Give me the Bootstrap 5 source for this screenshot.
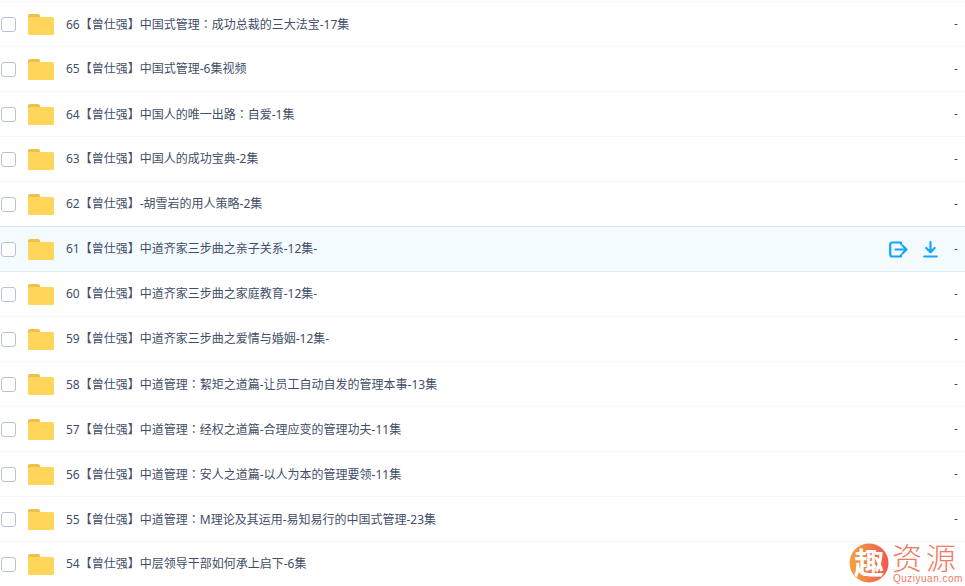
<!DOCTYPE html>
<html lang="zh">
<head>
<meta charset="utf-8">
<title>文件列表</title>
<link href="https://cdn.jsdelivr.net/npm/bootstrap@5.3.0/dist/css/bootstrap.min.css" rel="stylesheet">
<style>
html,body{height:586px;overflow:hidden;background:#fff}
body{font-family:"Noto Sans","Noto Sans CJK SC",sans-serif;font-size:12px;color:#424e67}
.file-list{margin-top:1px;border-top:1px solid #f2f6fd}
.file-row{height:45px;border-bottom:1px solid #f2f6fd}
.file-row.active-row{background:#f4fbff;border-bottom-color:#daebfe;box-shadow:0 -1px 0 #daebfe}
.tick{width:15px;height:15px;border:1px solid #b9c3d3;border-radius:3px;background:#fff;margin-left:1px;flex:none}
.folder{width:26px;height:21px;margin-left:12px;flex:none}
.fname{margin-left:12px;line-height:18px;white-space:nowrap}
.fname i{font-style:normal;font-family:"Noto Sans CJK TC",sans-serif}
.acts{gap:15px;margin-right:16px}
.acts svg{display:block}
.fsize{width:8px;text-align:left;margin-right:3px}
.wm{position:absolute;left:849px;top:543px;width:116px;height:43px;color:#ee7b62}
.wm-title{position:absolute;left:43px;top:-1px;font-size:30px;font-weight:300;line-height:28px;letter-spacing:4px;font-family:"Noto Sans CJK SC",sans-serif;white-space:nowrap}
.wm-sub{position:absolute;left:44px;top:30px;font-size:10px;line-height:12px;font-family:"Liberation Sans",sans-serif;letter-spacing:.5px;white-space:nowrap}
.wm-ball{position:absolute;left:0;top:0;width:40px;height:40px}
</style>
</head>
<body>
<div class="file-list" id="lst"></div>
<div class="wm">
<svg class="wm-ball" viewBox="0 0 40 40"><defs><linearGradient id="g" x1="0" y1="0" x2="1" y2="0"><stop offset="0" stop-color="#f4a23c"/><stop offset="1" stop-color="#ec5a55"/></linearGradient></defs><circle cx="20" cy="20" r="19.500" fill="url(#g)"/><text x="20" y="31" text-anchor="middle" font-size="30" font-weight="700" fill="#fff" font-family="Noto Sans CJK SC">趣</text></svg>
<div class="wm-title">资源</div>
<div class="wm-sub">Quziyuan.com</div>
</div>
<script>
const names=["66【曾仕强】中国式管理：成功总裁的三大法宝-17集","65【曾仕强】中国式管理-6集视频","64【曾仕强】中国人的唯一出路：自爱-1集","63【曾仕强】中国人的成功宝典-2集","62【曾仕强】-胡雪岩的用人策略-2集","61【曾仕强】中道齐家三步曲之亲子关系-12集-","60【曾仕强】中道齐家三步曲之家庭教育-12集-","59【曾仕强】中道齐家三步曲之爱情与婚姻-12集-","58【曾仕强】中道管理：絜矩之道篇-让员工自动自发的管理本事-13集","57【曾仕强】中道管理：经权之道篇-合理应变的管理功夫-11集","56【曾仕强】中道管理：安人之道篇-以人为本的管理要领-11集","55【曾仕强】中道管理：M理论及其运用-易知易行的中国式管理-23集","54【曾仕强】中层领导干部如何承上启下-6集"];
const folder='<svg class="folder" viewBox="0 0 26 21"><path d="M0 2a2 2 0 0 1 2-2h8a2 2 0 0 1 2 2v2H0z" fill="#eebf4e"/><rect y="3" width="26" height="18" rx="1.500" fill="#ffd659"/></svg>';
const acts='<div class="acts d-flex align-items-center"><svg width="19" height="17" viewBox="0 0 19 17" fill="none" stroke="#14a5f8" stroke-width="2.200"><path d="M12 3V1.500H3.500A2.300 2.300 0 0 0 1.200 3.800v9.400a2.300 2.300 0 0 0 2.300 2.300H12V14" stroke-linecap="round" stroke-linejoin="round"/><path d="M6.500 8.500h10.500M13.500 4.500l4 4-4 4" stroke-linecap="round" stroke-linejoin="round"/></svg><svg width="15" height="17" viewBox="0 0 15 17" fill="none" stroke="#14a5f8" stroke-width="2.200"><path d="M7.500 1.200v9.500M3.300 7l4.200 4.200L11.700 7" stroke-linecap="round" stroke-linejoin="round"/><path d="M1.200 15.500h12.600" stroke-linecap="round"/></svg></div>';
document.getElementById('lst').innerHTML=names.map((n,i)=>`<div class="file-row d-flex align-items-center${i==5?' active-row':''}"><span class="tick"></span>${folder}<span class="fname flex-grow-1">${n.replace('：','<i lang="zh-Hant">：</i>')}</span>${i==5?acts:''}${i==12?'':'<span class="fsize">-</span>'}</div>`).join('');
</script>
<script src="https://cdn.jsdelivr.net/npm/bootstrap@5.3.0/dist/js/bootstrap.bundle.min.js"></script>
</body>
</html>
